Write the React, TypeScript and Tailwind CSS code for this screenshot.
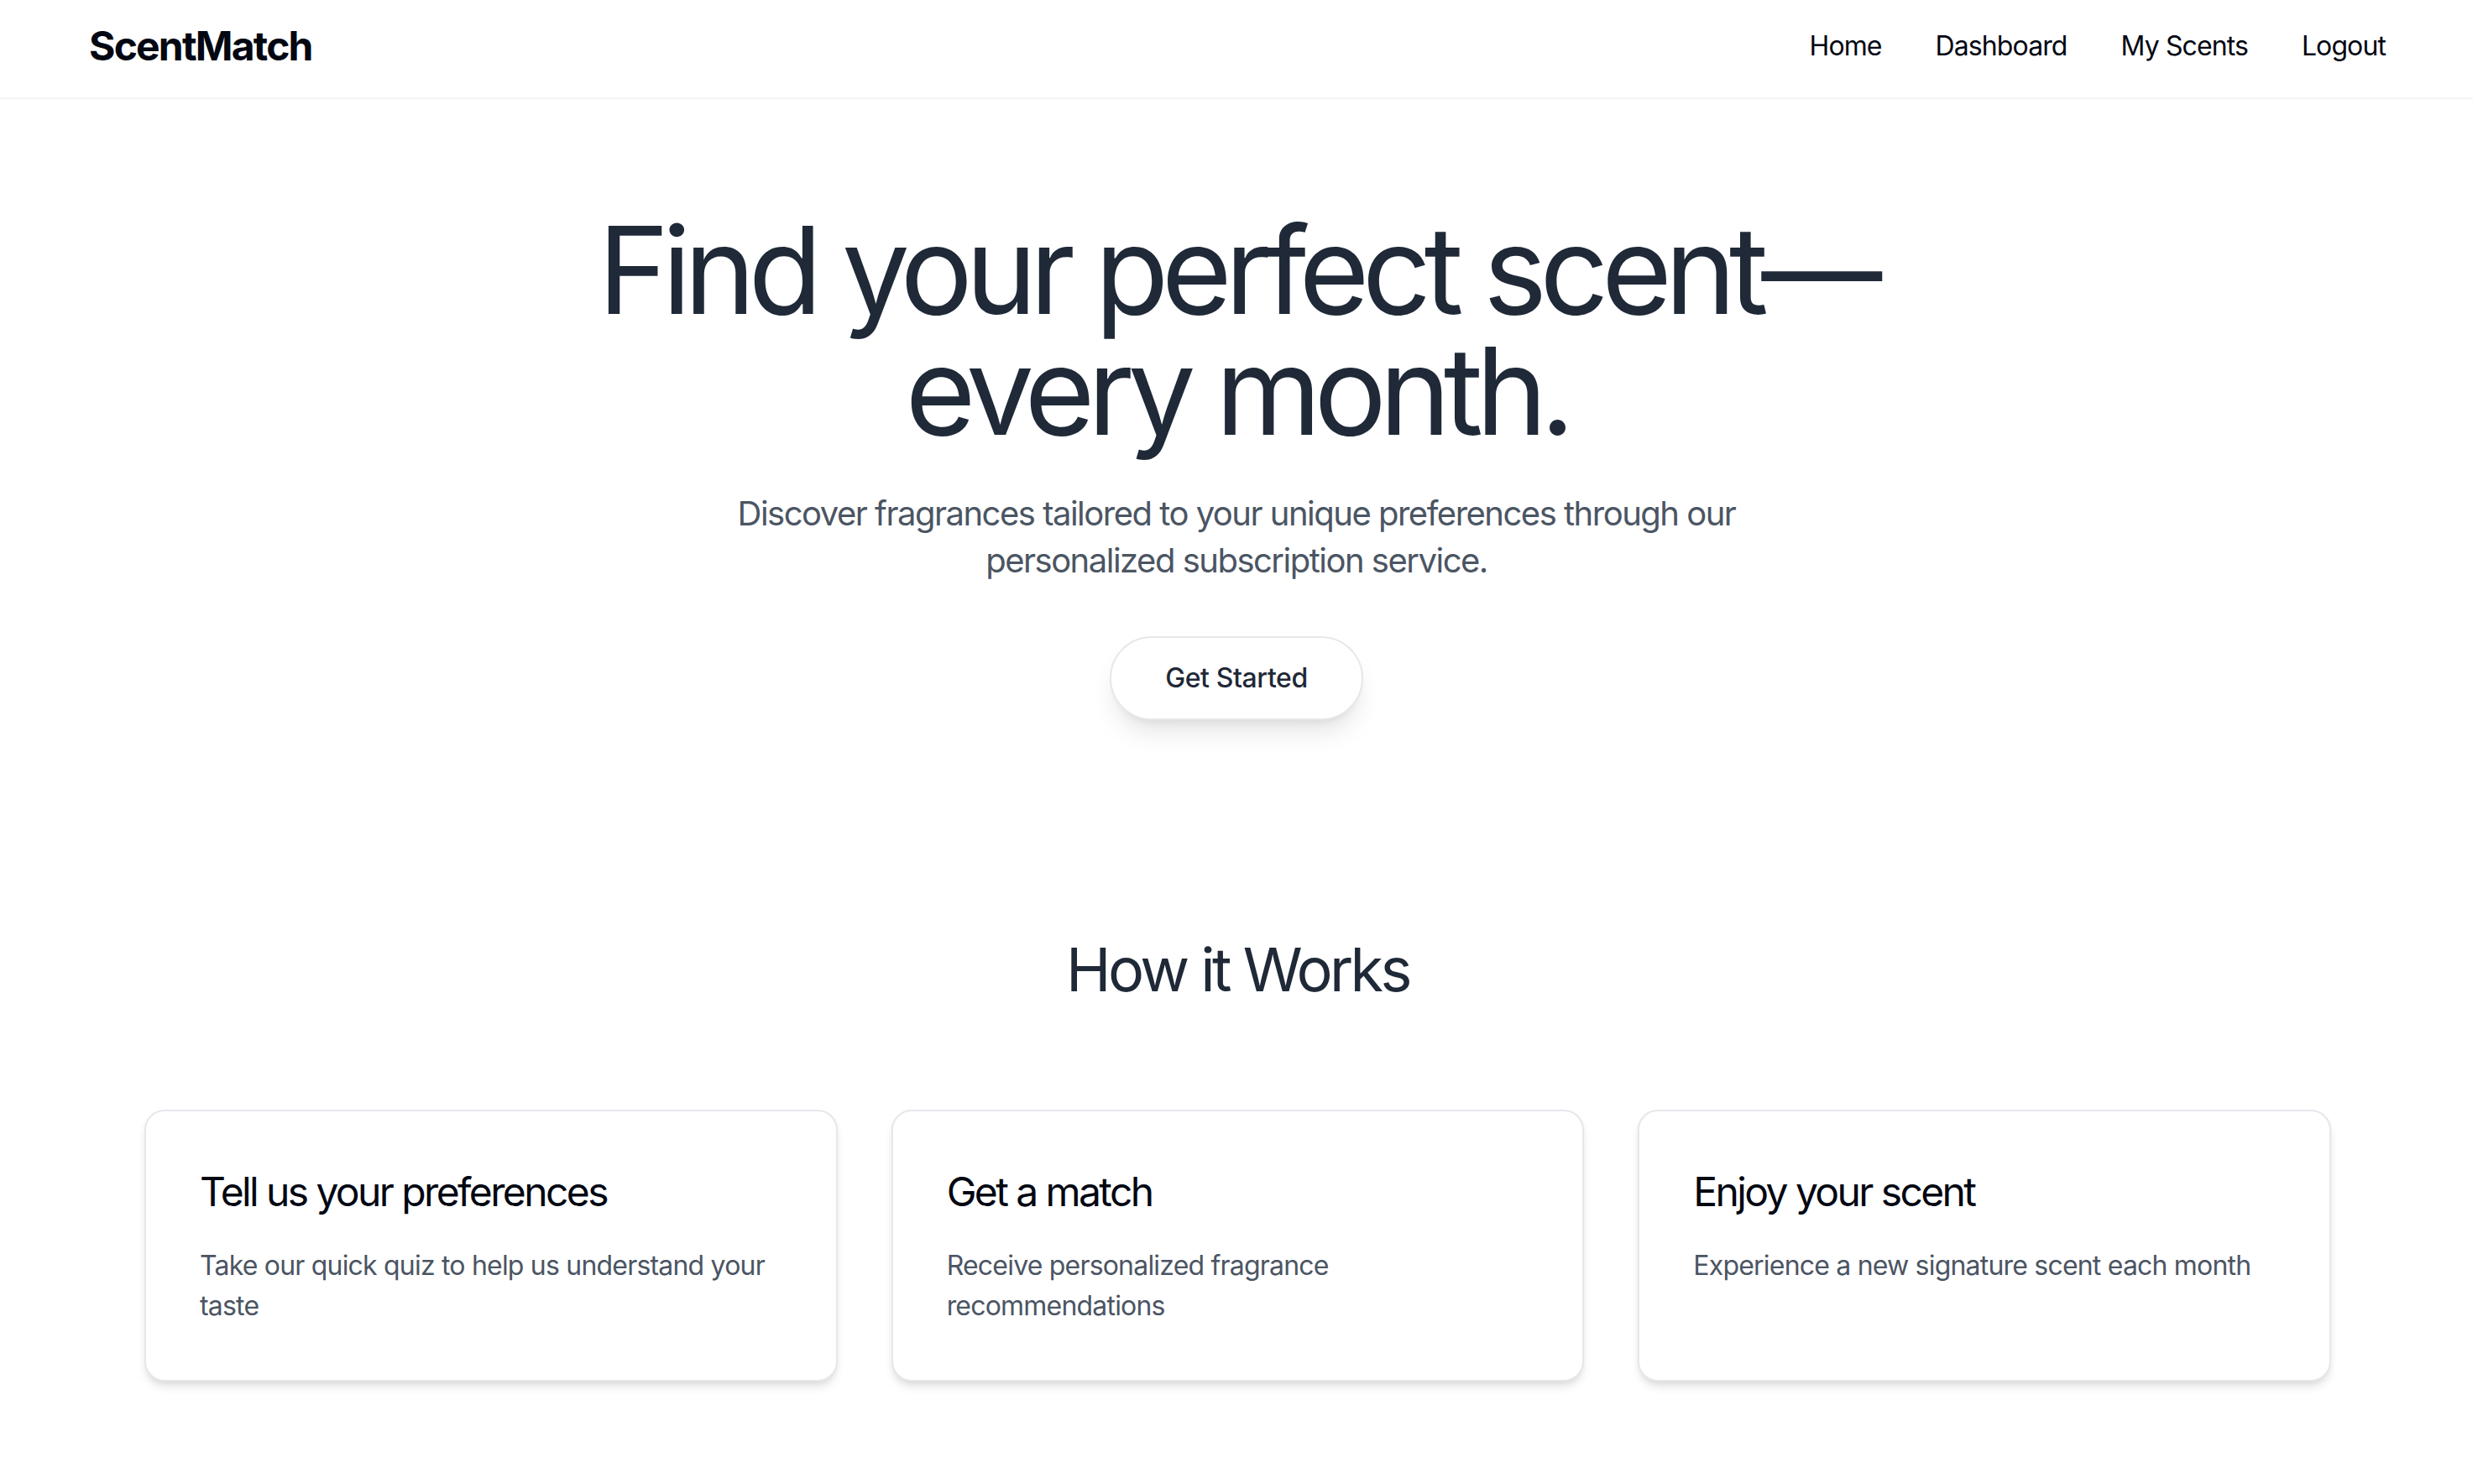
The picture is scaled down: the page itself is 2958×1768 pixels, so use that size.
export default function App() {
  const steps = [
    {
      title: "Tell us your preferences",
      desc: "Take our quick quiz to help us understand your taste",
    },
    {
      title: "Get a match",
      desc: "Receive personalized fragrance recommendations",
    },
    {
      title: "Enjoy your scent",
      desc: "Experience a new signature scent each month",
    },
  ];

  return (
    <div className="mr-[12px] min-h-screen bg-white font-['Inter','Noto_Sans',sans-serif] text-[#111827]">
      <header className="flex h-[118px] items-center justify-between border-b-2 border-[#f3f4f6] pb-[6px] pl-[106px] pr-[104px]">
        <div className="text-[48px] font-bold leading-[64px] tracking-[-1.8px] text-[#030712]">
          ScentMatch
        </div>
        <nav className="flex gap-[64px] text-[32px] leading-[48px] tracking-[-0.9px] text-[#030712]">
          <a href="#">Home</a>
          <a href="#">Dashboard</a>
          <a href="#">My Scents</a>
          <a href="#">Logout</a>
        </nav>
      </header>

      <main>
        <section className="flex flex-col items-center px-[64px] pb-[128px] pt-[132px] text-center">
          <h1 className="max-w-[1700px] text-[144px] font-normal leading-[144px] tracking-[-8.6px] text-[#1f2937]">
            Find your perfect scent—
            <br />
            every month.
          </h1>
          <p className="mt-[46px] max-w-[1344px] text-[40px] leading-[56px] tracking-[-1.5px] text-[#4b5563]">
            Discover fragrances tailored to your unique preferences through our
            personalized subscription service.
          </p>
          <button className="mt-[62px] rounded-full border-2 border-[#e5e7eb] bg-white px-[64px] py-[24px] text-[32px] font-medium leading-[48px] tracking-[-0.4px] text-[#1f2937] shadow-[0_20px_30px_-6px_rgba(0,0,0,0.1),0_8px_12px_-8px_rgba(0,0,0,0.1)]">
            Get Started
          </button>
        </section>

        <section className="pb-[128px] pl-[172px] pr-[169px] pt-[129px]">
          <h2 className="text-center text-[72px] font-normal leading-[80px] tracking-[-3.6px] text-[#1f2937]">
            How it Works
          </h2>
          <div className="mt-[127px] grid grid-cols-3 gap-[64px]">
            {steps.map((s) => (
              <div
                key={s.title}
                className="rounded-[24px] border-2 border-[#e5e7eb] bg-white p-[64px] shadow-[0_8px_12px_-2px_rgba(0,0,0,0.1),0_4px_8px_-4px_rgba(0,0,0,0.1)]"
              >
                <h3 className="text-[48px] font-normal leading-[64px] tracking-[-2.6px] text-[#030712]">
                  {s.title}
                </h3>
                <p className="mt-[32px] text-[32px] leading-[48px] tracking-[-0.8px] text-[#4b5563]">
                  {s.desc}
                </p>
              </div>
            ))}
          </div>
        </section>
      </main>
    </div>
  );
}
